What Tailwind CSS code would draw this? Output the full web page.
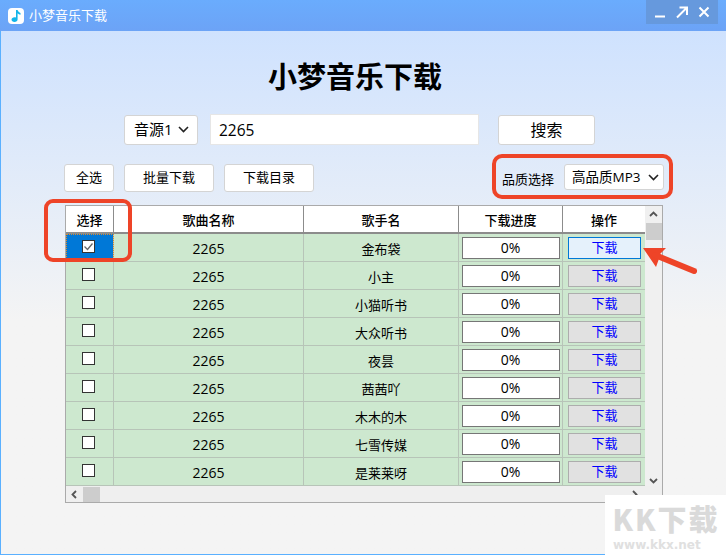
<!DOCTYPE html>
<html lang="zh">

<head>
    <meta charset="UTF-8">
    <meta name="viewport" content="width=device-width, initial-scale=1.0">
    <script src="https://cdn.jsdelivr.net/npm/@tailwindcss/browser@4"></script>
    <title>小梦音乐下载</title>
</head>

<body class="w-[726px] h-[555px] overflow-hidden font-['Open_Sans','Noto_Sans_CJK_SC',sans-serif] text-black">
    <div class="relative w-[726px] h-[555px] flex flex-col border-l border-b border-[#5ab0ff] bg-gradient-to-b from-[#cbe0ff] to-[#f4f4f4] to-[58%]">

        <!-- title bar -->
        <div class="-ml-px h-[31px] shrink-0 flex items-center bg-gradient-to-b from-[#6aacfd] to-[#6ca3f6] text-white">
            <div class="ml-2 w-4 h-4 rounded-sm bg-white flex items-center justify-center">
                <svg width="14" height="14" viewBox="0 0 14 14">
                    <path d="M7 1h1.600c.3 1.600 1.600 2.400 2.900 3v1.800c-1.200-.3-2.200-.9-2.900-1.600V10.500C8.600 12 7.200 13 5.500 13 3.800 13 2.500 12 2.500 10.600S3.800 8.200 5.500 8.200c.6 0 1.100.1 1.500.3z" fill="#12b5ea"></path>
                </svg>
            </div>
            <span class="ml-[5px] text-[13px]">小梦音乐下载</span>
            <div class="ml-auto mr-2 mb-[7px] w-[72px] h-6 flex items-center justify-around px-1 bg-[#6699dd]">
                <svg width="12" height="12" viewBox="0 0 12 12"><path d="M1 10.500h10" stroke="#fff" stroke-width="2"></path></svg>
                <svg width="14" height="14" viewBox="0 0 14 14"><path d="M2 12.500 11 3.500M4.500 2.500h7.500v7.500" stroke="#fff" stroke-width="2" fill="none"></path></svg>
                <svg width="12" height="12" viewBox="0 0 12 12"><path d="M1.500 1.500l9 9M10.500 1.500l-9 9" stroke="#fff" stroke-width="2"></path></svg>
            </div>
        </div>

        <h1 class="mt-[26px] h-10 -ml-px pr-[16px] text-center text-[29px] leading-10 font-bold">小梦音乐下载</h1>

        <!-- search row -->
        <div class="mt-[17px] ml-[123px] h-[31px] flex items-center">
            <div class="w-[74px] h-[30px] flex items-center justify-between pl-[9px] pr-[8px] bg-white border border-[#d4d4d4] rounded-[3px] text-[15px]">
                <span>音源1</span>
                <svg width="11" height="7" viewBox="0 0 11 7"><path d="M1 1l4.500 4.500L10 1" stroke="#222" stroke-width="1.600" fill="none"></path></svg>
            </div>
            <input type="text" value="2265" class="ml-3 w-[269px] h-[31px] px-2 bg-white border border-[#e6e6e6] text-[15.500px] outline-none">
            <button class="ml-[19px] w-[97px] h-[30px] bg-white border border-[#d4d4d4] rounded-[3px] text-[16px]">搜索</button>
        </div>

        <!-- tool row -->
        <div class="mt-[19px] ml-[63px] h-7 flex items-start">
            <button class="w-[50px] h-[28px] bg-white border border-[#d4d4d4] rounded-[3px] text-[13px]">全选</button>
            <button class="ml-[10px] w-[90px] h-[28px] bg-white border border-[#d4d4d4] rounded-[3px] text-[13px]">批量下载</button>
            <button class="ml-[10px] w-[90px] h-[28px] bg-white border border-[#d4d4d4] rounded-[3px] text-[13px]">下载目录</button>
            <span class="ml-[188px] mt-[5px] text-[13px] leading-[20px]">品质选择</span>
            <div class="ml-[10px] w-[100px] h-[26px] flex items-center justify-between pl-[7px] pr-[4px] bg-white border border-[#d4d4d4] rounded-[3px] text-[13.500px]">
                <span>高品质MP3</span>
                <svg width="11" height="7" viewBox="0 0 11 7"><path d="M1 1l4.500 4.500L10 1" stroke="#222" stroke-width="1.600" fill="none"></path></svg>
            </div>
        </div>

        <!-- song table -->
        <div class="mt-[13px] ml-[64px] w-[598px] h-[298px] flex flex-col border border-[#aaaaaa] overflow-hidden bg-[#efefef]">
            <div class="flex h-[280px]">
                <div class="w-[579px] shrink-0 flex flex-col overflow-hidden">
                    <div class="flex h-[28px] shrink-0 bg-white border-b-2 border-[#8c8c8c] text-[13px] font-medium text-center leading-[28px]">
                        <div class="w-[48px] border-r border-[#8c8c8c]">选择</div>
                        <div class="w-[190px] border-r border-[#8c8c8c]">歌曲名称</div>
                        <div class="w-[155px] border-r border-[#8c8c8c]">歌手名</div>
                        <div class="w-[104px] border-r border-[#8c8c8c]">下载进度</div>
                        <div class="w-[82px]">操作</div>
                    </div>
                    <div id="rows" class="flex flex-col"></div>
                </div>
                <!-- vertical scrollbar -->
                <div class="w-[17px] shrink-0 flex flex-col items-center bg-[#f0f0f0]">
                    <svg class="mt-[5px]" width="9" height="6" viewBox="0 0 9 6"><path d="M1 5l3.500-3.500L8 5" stroke="#555" stroke-width="1.800" fill="none"></path></svg>
                    <div class="mt-[6px] w-[16px] h-[17px] bg-[#cdcdcd]"></div>
                    <svg class="mt-auto mb-[2px]" width="9" height="6" viewBox="0 0 9 6"><path d="M1 1l3.500 3.500L8 1" stroke="#555" stroke-width="1.800" fill="none"></path></svg>
                </div>
            </div>
            <!-- horizontal scrollbar -->
            <div class="h-[16px] flex items-center bg-[#efefef]">
                <svg class="ml-[5px]" width="6" height="9" viewBox="0 0 6 9"><path d="M5 1L1.500 4.500 5 8" stroke="#555" stroke-width="1.800" fill="none"></path></svg>
                <div class="ml-[6px] w-[17px] h-[15px] bg-[#cdcdcd]"></div>
                <svg class="ml-auto mr-[24px]" width="6" height="9" viewBox="0 0 6 9"><path d="M1 1l3.500 3.500L1 8" stroke="#555" stroke-width="1.800" fill="none"></path></svg>
            </div>
        </div>

        <!-- red annotations -->
        <div class="absolute left-[43px] top-[199px] w-[88px] h-[63px] border-[4px] border-[#ee4428] rounded-[9px]"></div>
        <div class="absolute left-[491px] top-[154px] w-[181px] h-[45px] border-[4px] border-[#ee4428] rounded-[10px]"></div>
        <svg class="absolute left-[640px] top-[240px]" width="60" height="36" viewBox="0 0 60 36">
            <path d="M2 8 25 8 19 14 Q17 15 19 16 L15 27z" fill="#ee4428"></path>
            <path d="M14 15 53 31" stroke="#ee4428" stroke-width="6" stroke-linecap="round"></path>
        </svg>

        <!-- watermark -->
        <div class="absolute left-[604px] top-[495px] w-[122px] h-[60px] bg-white overflow-hidden">
            <div class="mt-[5px] h-[36px] text-center text-[29px] leading-[36px] font-black text-[#dadada] tracking-[2px] font-['Noto_Sans_CJK_SC',sans-serif]">KK下载</div>
            <div class="mt-[2px] ml-[8px] text-[12px] leading-[14px] font-bold text-[#e0e0e0] font-['DejaVu_Sans',sans-serif]">www.kkx.net</div>
        </div>
    </div>

    <script>
        const singers = ['金布袋', '小主', '小猫听书', '大众听书', '夜昙', '茜茜吖', '木木的木', '七雪传媒', '是莱莱呀'];
        const rows = document.getElementById('rows');

        singers.forEach((name, i) => {
            const first = i === 0;
            const check = first
                ? '<svg width="11" height="11" viewBox="0 0 11 11"><path d="M1.500 5.500l3 3 5-6" stroke="#666" stroke-width="1.300" fill="none"></path></svg>'
                : '';
            const cellBg = first
                ? 'bg-[#0078d7] outline-1 -outline-offset-1 outline-dotted outline-[#e08a2a]'
                : '';
            const btn = first
                ? 'border-[#0078d7] bg-[#e5f1fb]'
                : 'border-[#adadad] bg-[#e1e1e1]';

            rows.innerHTML += `
                <div class="flex h-[28px] shrink-0 bg-[#cde8cf] border-b border-[#b7c4b8] text-[13px] text-center">
                    <div class="w-[48px] h-[27px] border-r border-[#b7c4b8] flex justify-center pt-[6px] pr-[2px] ${cellBg}">
                        <div class="w-[13px] h-[13px] bg-white border border-[#333333] flex items-center justify-center">${check}</div>
                    </div>
                    <div class="w-[190px] border-r border-[#b7c4b8] text-[14px] leading-[30px]">2265</div>
                    <div class="w-[155px] border-r border-[#b7c4b8] leading-[30px]">${name}</div>
                    <div class="w-[104px] border-r border-[#b7c4b8] flex justify-center pt-[3px]">
                        <div class="w-[98px] h-[22px] bg-white border border-[#767676] text-[14px] leading-[19px]">0%</div>
                    </div>
                    <div class="w-[82px] flex justify-end pr-[4px] pt-[3px]">
                        <div class="w-[73px] h-[22px] border text-[#0000ff] leading-[19px] ${btn}">下载</div>
                    </div>
                </div>`;
        });
    </script>
</body>

</html>
